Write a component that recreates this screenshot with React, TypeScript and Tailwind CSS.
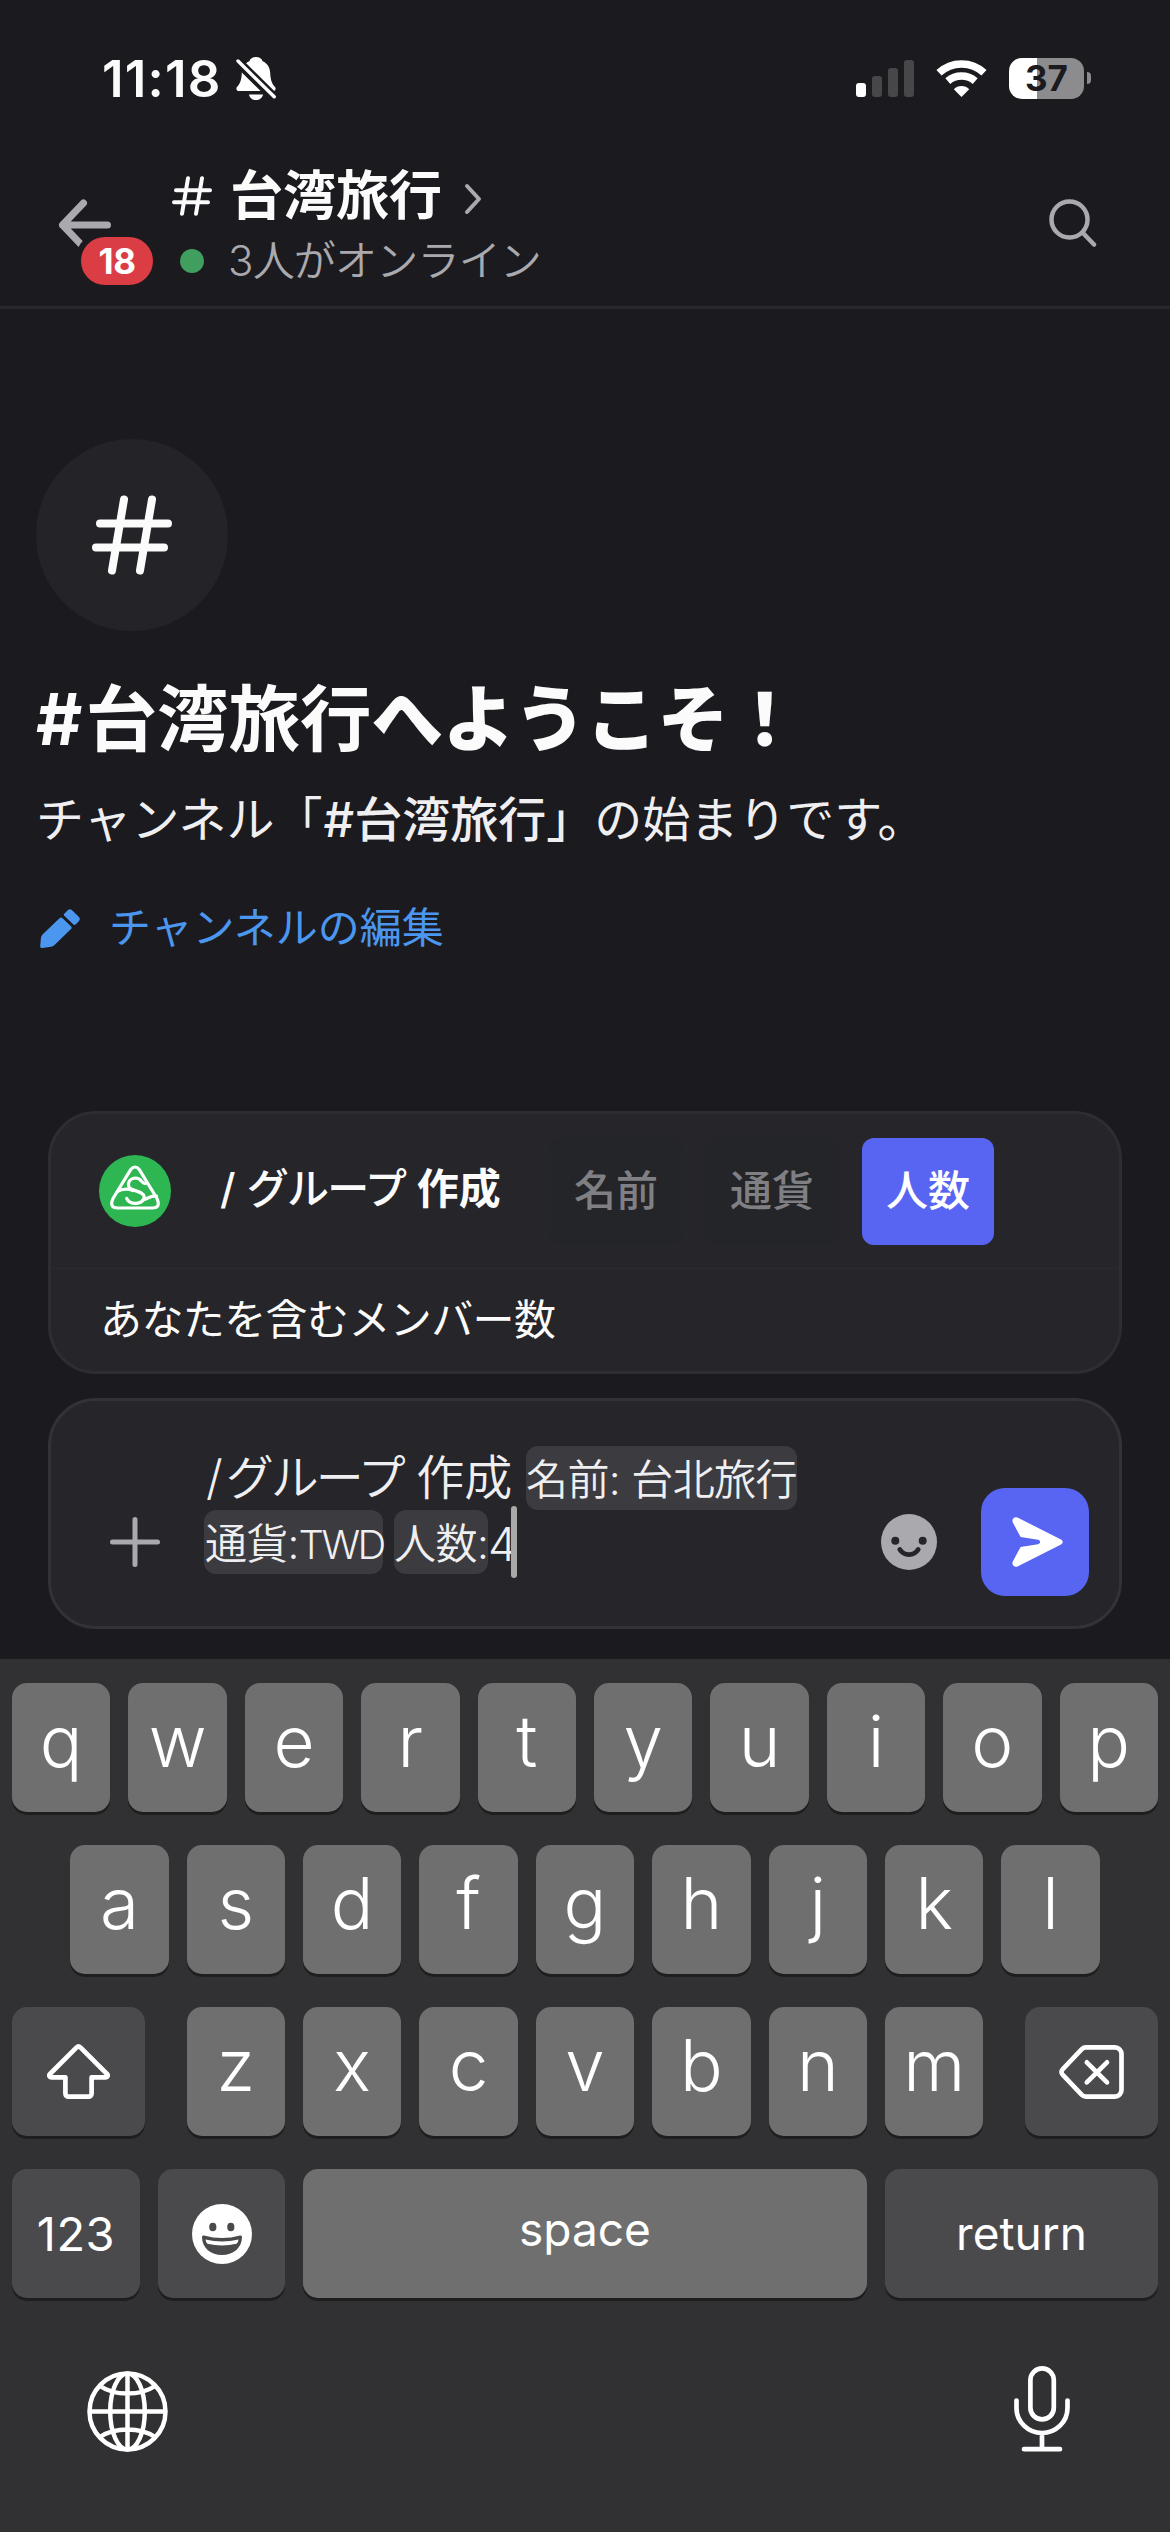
import React from 'react';

const ROW_1 = ['q', 'w', 'e', 'r', 't', 'y', 'u', 'i', 'o', 'p'];
const ROW_2 = ['a', 's', 'd', 'f', 'g', 'h', 'j', 'k', 'l'];
const ROW_3 = ['z', 'x', 'c', 'v', 'b', 'n', 'm'];

const options = [
    { name: '名前', active: false },
    { name: '通貨', active: false },
    { name: '人数', active: true },
];

const HashIcon = ({ className }: { className: string }) => (
    <svg viewBox="0 0 80 80" className={className} fill="none" stroke="#fbfbfb" strokeWidth="8" strokeLinecap="round">
        <path d="M8 28.5H76M4 52.5H72M32 4.5L20 75.5M60 4.5L48 75.5" />
    </svg>
);

const AppLogo = () => (
    <svg viewBox="0 0 72 72" className="size-[72px]" fill="none" stroke="#fff" strokeWidth="3.2" strokeLinecap="round" strokeLinejoin="round">
        <circle cx="36" cy="36" r="36" fill="#2db651" stroke="none" />
        <path d="M31.5 14.8Q36 9.2 40.5 14.8L58 43.5Q62 53 53.5 53H18.5Q10 53 14 43.5Z" />
        <path d="M46.5 28.5C42 29.5 43.5 23 36.5 23C29 23.5 27.5 31 32 34C37 36.5 45 37 45.3 42C44 50 31 50.5 27.7 43.5" />
        <path d="M18.5 36.5C23 33.8 29 33.5 34 35.5M43.8 45C48 44 52 40.5 57.5 41" />
    </svg>
);

const StatusBar = () => (
    <div className="flex h-[156px] shrink-0 items-center justify-between pl-[102px] pr-[79px]">
        <div className="flex items-center">
            <span className="w-[134px] text-[51px] font-semibold leading-none tracking-[1.200px]">11:18</span>
            <svg viewBox="0 0 40 43" className="h-[43px] w-10">
                <path d="M20 0C23.5 0 26 2 26.6 4.2C31.5 6.2 34 10.5 34.2 16C34.5 23.5 36 26.5 39 30C40.5 32 39 34 37 34H3C1 34-.5 32 1 30C4 26.5 5.5 23.5 5.8 16C6 10.5 8.5 6.2 13.4 4.2C14 2 16.5 0 20 0ZM13 37.5H27C26.5 41 23.5 43 20 43S13.500 41 13 37.5Z" fill="#fff" />
                <path d="M.5 3.5L39 41.5" stroke="#1b1a1f" strokeWidth="9.5" />
                <path d="M2 4L38.2 39.8" stroke="#fff" strokeWidth="3.4" strokeLinecap="round" />
            </svg>
        </div>
        <div className="flex items-center">
            <svg viewBox="0 0 58 37" className="h-[37px] w-[58px]" fill="#47474a">
                <rect x="0" y="23" width="10" height="14" rx="3" fill="#fff" />
                <rect x="16" y="16" width="10" height="21" rx="3" />
                <rect x="32" y="8" width="10" height="29" rx="3" />
                <rect x="48" y="0" width="10" height="37" rx="3" />
            </svg>
            <svg viewBox="0 0 51 37" className="ml-[22px] h-[37px] w-[51px]" fill="none" stroke="#fff">
                <path d="M3 12.8A33 33 0 0 1 48 12.8" strokeWidth="7.5" />
                <path d="M11.8 21.2A21 21 0 0 1 39.2 21.2" strokeWidth="7.5" />
                <path d="M25.5 37L17.8 29.2A11 11 0 0 1 33.2 29.2Z" fill="#fff" stroke="none" />
            </svg>
            <div className="ml-[22px] flex h-[41px] w-[75px] items-center justify-center rounded-[13px] bg-linear-to-r from-white from-[37.5%] to-[#8c8c8e] to-[37.5%] text-[35px] font-bold leading-none text-[#1b1a1f]">
                37
            </div>
            <div className="ml-[3px] h-3 w-1 rounded-r-full bg-[#8c8c8e]" />
        </div>
    </div>
);

const Header = () => (
    <div className="flex h-[153px] shrink-0 items-start border-b-3 border-[#27272c] pl-[58px] pr-[73px]">
        <div className="relative mt-[43px] w-[114px]">
            <svg viewBox="0 0 54 52" className="h-[52px] w-[54px]" fill="none" stroke="#a9a9ae" strokeWidth="7" strokeLinecap="round" strokeLinejoin="round">
                <path d="M49.5 26H4.5M25.5 4L4.5 26L25.5 48" />
            </svg>
            <div className="absolute left-[23px] top-[38px] flex h-12 w-[72px] items-center justify-center rounded-full bg-[#da3e44] text-[35px] font-bold leading-none tracking-[-0.5px] text-white ring-6 ring-[#1b1a1f]">
                18
            </div>
        </div>
        <div className="flex flex-col gap-[17px] pt-[13px]">
            <div className="flex h-[54px] items-center">
                <HashIcon className="size-10" />
                <span className="ml-[18px] text-[53px] font-bold leading-none">台湾旅行</span>
                <svg viewBox="0 0 18 32" className="ml-[22px] mt-1.5 h-8 w-[18px]" fill="none" stroke="#a9a9ae" strokeWidth="4" strokeLinecap="round" strokeLinejoin="round">
                    <path d="M3 3L15 16L3 29" />
                </svg>
            </div>
            <div className="flex h-[42px] items-center pl-2">
                <div className="size-6 rounded-full bg-[#409e5f]" />
                <span className="ml-6 text-[42px] font-[350] leading-none tracking-[-0.800px] text-[#a9a9ae]">3人がオンライン</span>
            </div>
        </div>
        <svg viewBox="0 0 48 48" className="ml-auto mt-[43px] size-12" fill="none" stroke="#a9a9ae" strokeLinecap="round">
            <circle cx="20.5" cy="20.5" r="18" strokeWidth="4.5" />
            <path d="M34 34L45 45.5" strokeWidth="4.5" />
        </svg>
    </div>
);

const Welcome = () => (
    <div className="flex flex-1 flex-col items-start pl-9 pt-[130px]">
        <div className="flex size-48 items-center justify-center rounded-full bg-[#242428]">
            <HashIcon className="size-20" />
        </div>
        <h1 className="mt-11 whitespace-nowrap text-[71.500px] font-bold leading-[88px]">
            <span className="tracking-[3px]">#</span>台湾旅行<span className="font-black">へようこそ！</span>
        </h1>
        <p className="mt-[27px] whitespace-nowrap text-[48px] leading-[60px] text-[#efeff1]">
            チャンネル「<span className="ml-px font-medium">#台湾旅行」</span>の始まりです。
        </p>
        <a className="mt-[54px] flex h-12 items-center gap-[29px] text-[#4b96ee]">
            <svg viewBox="0 0 40 39" className="ml-1 h-[39px] w-10" fill="currentColor">
                <path d="M2.5 25.5L19.5 9.2Q21 7.8 22.5 9.2L31 17.3Q32.3 18.7 31 20L14.5 36Q13 37.5 11 37.8L2.5 39Q0 39.3 .2 37L1 28.5Q1.200 26.8 2.5 25.5Z" />
                <path d="M24.5 4.5L27.5 1.5Q29.8-.8 32.3 1.5L38.5 7.5Q41 10 38.8 12.3L35.8 15.3Q34.5 16.5 33.2 15.3L24.5 7Q23.2 5.7 24.5 4.5Z" />
            </svg>
            <span className="text-[42px] leading-none">チャンネルの編集</span>
        </a>
    </div>
);

const CommandHint = () => (
    <div className="flex h-[263px] flex-col rounded-[48px] border-3 border-[#2d2d32] bg-[#25252a]">
        <div className="flex h-[155px] items-center border-b border-[#2a2a2f] pl-12">
            <AppLogo />
            <div className="mb-1 ml-[49px] whitespace-nowrap text-[42px] font-medium leading-none text-[#fbfbfb]">
                / <span className="tracking-[-1.700px]">グループ</span> <span className="font-semibold">作成</span>
            </div>
            <div className="ml-auto mr-[125px] flex gap-6">
                {options.map(o => (
                    <div
                        key={o.name}
                        className={`flex h-[107px] w-[132px] items-center justify-center rounded-xl text-[42px] font-medium leading-none ${o.active ? 'bg-[#5865f2] text-white' : 'bg-[#242528] text-[#808084]'}`}
                    >
                        {o.name}
                    </div>
                ))}
            </div>
        </div>
        <div className="flex h-[102px] items-center pl-[49px] text-[42px] leading-none tracking-[-0.600px] text-[#fbfbfb]">
            あなたを含むメンバー数
        </div>
    </div>
);

const MessageInput = () => (
    <div className="mt-6 flex h-[231px] rounded-[48px] border-3 border-[#323237] bg-[#25252a] text-[#efeff1]">
        <svg viewBox="0 0 50 50" className="ml-[59px] mt-[116px] size-[50px]" fill="none" stroke="#a9a9ae" strokeWidth="5" strokeLinecap="round">
            <path d="M25 2.5V47.5M2.5 25H47.5" />
        </svg>
        <div className="ml-11 mt-[45px] flex flex-col whitespace-nowrap text-[42px] font-[350]">
            <div className="flex h-16">
                <span className="w-[322px] pl-0.5 text-[48px] leading-[64px]">
                    /<span className="ml-[3px] tracking-[-3px]">グループ</span> 作成
                </span>
                <span className="w-[271px] rounded-xl bg-[#3c3b40] leading-[68px] tracking-[-0.600px]">名前: 台北旅行</span>
            </div>
            <div className="flex h-16">
                <span className="w-[179px] rounded-xl bg-[#3c3b40] pl-px leading-[68px]">
                    <span className="tracking-[-0.800px]">通貨:</span>
                    <span className="text-[40px] tracking-[-2.500px]">TWD</span>
                </span>
                <span className="ml-[11px] w-[94px] rounded-xl bg-[#3c3b40] leading-[68px] tracking-[-0.500px]">人数:</span>
                <span className="w-[23px] text-[46px] leading-[68px] tracking-[-2px]">4</span>
                <span className="-mt-1 h-[72px] w-1.5 rounded-sm bg-[#a9a9a9]" />
            </div>
        </div>
        <svg viewBox="0 0 56 56" className="ml-auto mt-[113px] size-14">
            <circle cx="28" cy="28" r="28" fill="#a9a9ae" />
            <circle cx="14.3" cy="26.7" r="4" fill="#25252a" />
            <circle cx="41.7" cy="26.7" r="4" fill="#25252a" />
            <path d="M18.8 35.5C23 42.2 33 42.2 37.2 35.5" fill="none" stroke="#25252a" strokeWidth="4.8" strokeLinecap="round" />
        </svg>
        <button className="ml-11 mr-[30px] mt-[87px] flex size-[108px] items-center justify-center rounded-3xl bg-[#5865f2]">
            <svg viewBox="0 0 51 50" className="ml-1 h-[50px] w-[51px]" fill="#fff">
                <path d="M.8 5.5C-.8 1.5 3-.8 6 .8L49 22.5C51.3 23.8 51.3 26.2 49 27.5L6 49.2C3 50.8-.8 48.5 .8 44.5L8.6 30L26 27.2C28.8 26.5 28.8 23.5 26 22.8L8.6 20Z" />
            </svg>
        </button>
    </div>
);

interface KeyProps {
    children?: React.ReactNode;
    className?: string;
}

const Key = ({ children, className = 'w-[98.400px] bg-[#6f6f70] pb-3 text-[71px] font-[350]' }: KeyProps) => (
    <div className={`flex h-[129px] shrink-0 items-center justify-center rounded-[15px] leading-none text-white shadow-[0_3px_0_#1e1e1f] ${className}`}>
        {children}
    </div>
);

const Keyboard = () => (
    <div className="flex h-[873px] shrink-0 flex-col gap-[33px] bg-[#313133] px-3 pt-6">
        <div className="flex justify-between">
            {ROW_1.map(k => <Key key={k}>{k}</Key>)}
        </div>
        <div className="flex justify-center gap-[18px]">
            {ROW_2.map(k => <Key key={k}>{k}</Key>)}
        </div>
        <div className="flex justify-between">
            <Key className="w-[133px] bg-[#4a4a4c]">
                <svg viewBox="0 0 63 55" className="h-[55px] w-[63px]" fill="none" stroke="#fff" strokeWidth="4.7" strokeLinejoin="round">
                    <path d="M29.6 3.4a2.8 2.8 0 0 1 3.8 0L60 30c1.5 1.5 .6 3.3-1.2 3.3H44.6V49.6a3 3 0 0 1-3 3H21.4a3 3 0 0 1-3-3V33.3H4.2C2.4 33.3 1.5 31.5 3 30Z" />
                </svg>
            </Key>
            <div className="flex gap-[18px]">
                {ROW_3.map(k => <Key key={k}>{k}</Key>)}
            </div>
            <Key className="w-[133px] bg-[#4a4a4c]">
                <svg viewBox="0 0 65 54" className="h-[54px] w-[65px]" fill="none" stroke="#fff" strokeWidth="4.7" strokeLinecap="round">
                    <path d="M27 2.4H56a6.5 6.5 0 0 1 6.5 6.5V45.1a6.5 6.5 0 0 1-6.5 6.5H27c-1.6 0-3-.6-4.2-1.8L3.6 29.6a3.6 3.6 0 0 1 0-5.2L22.8 4.2C24 3 25.4 2.4 27 2.4Z" />
                    <path d="M27.8 17.3L48 37.3M48 17.3L27.8 37.3" />
                </svg>
            </Key>
        </div>
        <div className="flex justify-between">
            <Key className="w-32 bg-[#4a4a4c] text-[47px] tracking-[0.500px]">123</Key>
            <Key className="w-[127px] bg-[#4a4a4c]">
                <svg viewBox="0 0 60 60" className="size-[60px]">
                    <circle cx="30" cy="30" r="30" fill="#fff" />
                    <ellipse cx="20.8" cy="23" rx="3.6" ry="4.3" fill="#4a4a4c" />
                    <ellipse cx="38.8" cy="23" rx="3.6" ry="4.3" fill="#4a4a4c" />
                    <path d="M10 33Q10 31 12 31.5Q30 36.5 48 31.5Q50 31 50 33C50 44 41 51 30 51S10 44 10 33Z" fill="#4a4a4c" />
                    <path d="M13.5 35.5Q30 39.5 46.5 35.5Q46.3 38.5 44.5 39.8Q30 43 15.5 39.8Q13.7 38.5 13.5 35.5Z" fill="#fff" />
                </svg>
            </Key>
            <Key className="w-[564px] bg-[#6f6f70] pb-2.5 text-[46px]">space</Key>
            <Key className="w-[273px] bg-[#4a4a4c] pb-0.5 text-[46px]">return</Key>
        </div>
        <div className="mt-[35px] flex items-start justify-between pl-[75px] pr-[88px]">
            <svg viewBox="0 0 81 81" className="mt-[5px] size-[81px]" fill="none" stroke="#fff" strokeWidth="4.5">
                <circle cx="40.5" cy="40.5" r="38" />
                <ellipse cx="40.5" cy="40.5" rx="17.3" ry="38" />
                <path d="M40.5 2.5V78.5M2.5 40.5H78.5M13 15Q24 22.5 40.5 22.5T68 15M13 66Q24 58.5 40.5 58.5T68 66" />
            </svg>
            <svg viewBox="0 0 56 86" className="h-[86px] w-14" fill="none" stroke="#fff" strokeWidth="4.7" strokeLinecap="round">
                <rect x="16.4" y="2.4" width="23.4" height="51" rx="11.7" />
                <path d="M2.5 34.5V42a25.5 25 0 0 0 51 0V34.5M28 67V83M10 83.2H46" />
            </svg>
        </div>
    </div>
);

const App = () => (
    <div
        lang="ja"
        className="flex h-[2532px] w-[1170px] flex-col overflow-hidden bg-[#1b1a1f] font-['Inter','Noto_Sans_CJK_JP',sans-serif] text-[#fbfbfb]"
    >
        <StatusBar />
        <Header />
        <Welcome />
        <div className="shrink-0 px-12 pb-[30px]">
            <CommandHint />
            <MessageInput />
        </div>
        <Keyboard />
    </div>
);

export default App;
